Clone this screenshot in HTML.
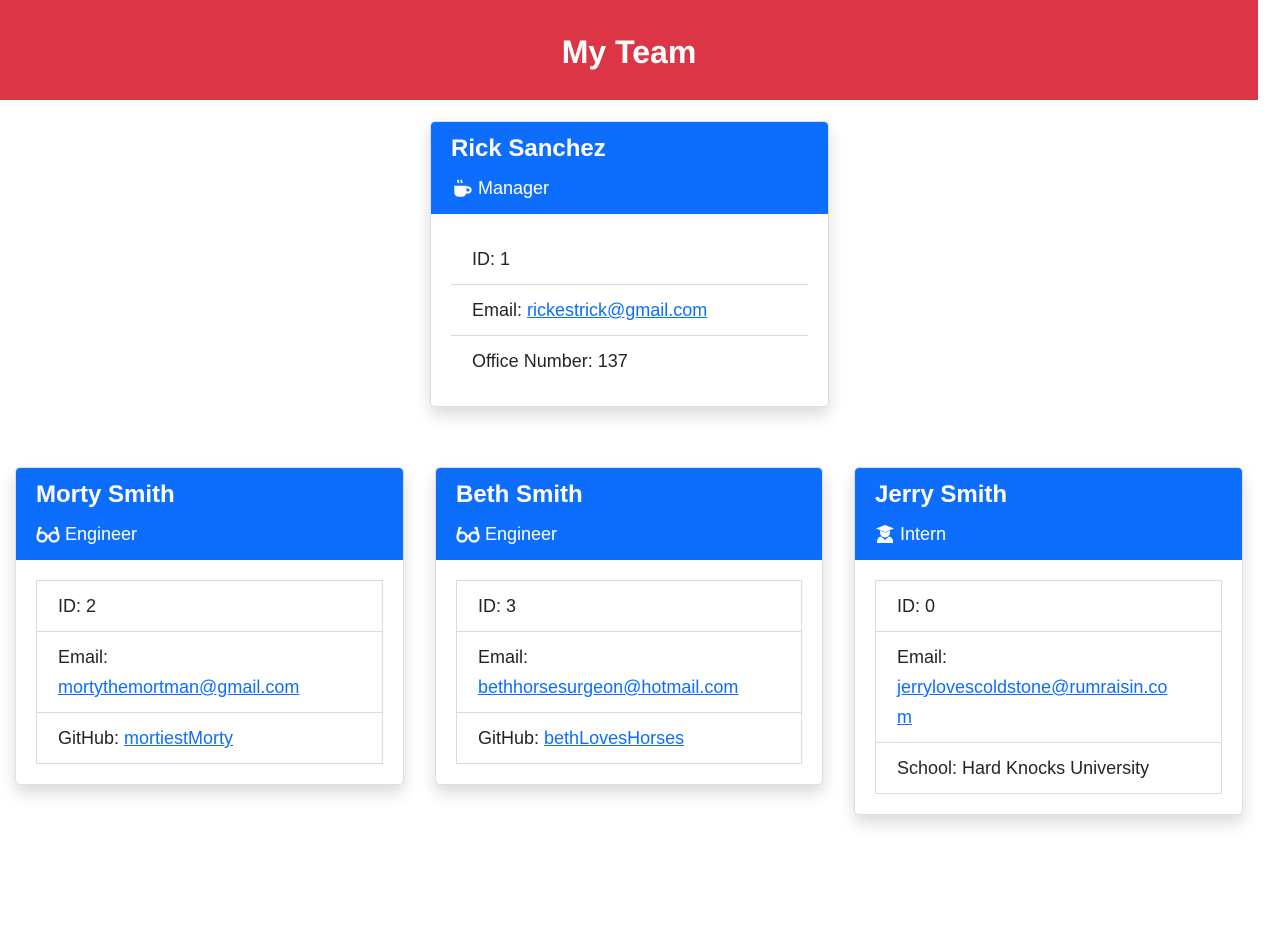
<!DOCTYPE html>
<html><head><meta charset="utf-8"><style>
*{box-sizing:border-box;margin:0;padding:0}
body{width:1273px;height:930px;background:#fff;font-family:"Liberation Sans",sans-serif;color:#212529;font-size:18px;overflow:hidden}
.hdr{position:absolute;left:0;top:0;width:1258px;height:100px;background:#dc3545;color:#fff;text-align:center;font-size:32px;font-weight:bold;line-height:104px}
.card{position:absolute;background:#fff;border:1px solid rgba(0,0,0,.125);border-radius:5px;box-shadow:0 8px 16px rgba(0,0,0,.15);overflow:hidden}
.ch{background:#0d6efd;color:#fff;height:92px;padding:10px 20px}
.ch h2{font-size:24px;font-weight:bold;line-height:32px;margin-top:1px}
.ch .r{font-size:18px;line-height:28px;margin-top:9px;display:flex;align-items:center}
.ch .r svg{margin-right:5px}
.cb{padding:20px}
.lg{border:1px solid #dcdcdc}
.lg.fl{border:none}
.li{padding:10px 21px;line-height:30px;border-top:1px solid #dcdcdc}
.li:first-child{border-top:none}
a{color:#0d6efd;text-decoration:underline}
</style></head><body>
<div class="hdr">My Team</div>

<div class="card" style="left:430px;top:121px;width:399px;height:286px">
<div class="ch"><h2>Rick Sanchez</h2><div class="r"><svg width="22" height="22" viewBox="0 0 20 20"><path d="M3 8h11v6a4 4 0 0 1-4 4H7a4 4 0 0 1-4-4z" fill="#fff"/><path d="M14 9.5h1.5a2.3 2.3 0 0 1 0 4.6H14" stroke="#fff" stroke-width="2" fill="none"/><path d="M6 2.5l1 3M9 2.5l1 3" stroke="#fff" stroke-width="1.5"/></svg>Manager</div></div>
<div class="cb"><div class="lg fl">
<div class="li">ID: 1</div>
<div class="li">Email: <a>rickestrick@gmail.com</a></div>
<div class="li">Office Number: 137</div>
</div></div></div>

<div class="card" style="left:15px;top:467px;width:389px;height:318px">
<div class="ch"><h2>Morty Smith</h2><div class="r"><svg width="24" height="18" viewBox="0 0 24 18"><g stroke="#fff" stroke-width="2.2" fill="none"><circle cx="6" cy="12" r="4.5"/><circle cx="18" cy="12" r="4.5"/><path d="M10 11h4M1.5 12l2-9h2M22.5 12l-2-9h-2"/></g></svg>Engineer</div></div>
<div class="cb"><div class="lg">
<div class="li">ID: 2</div>
<div class="li">Email:<br><a>mortythemortman@gmail.com</a></div>
<div class="li">GitHub: <a>mortiestMorty</a></div>
</div></div></div>

<div class="card" style="left:435px;top:467px;width:388px;height:318px">
<div class="ch"><h2>Beth Smith</h2><div class="r"><svg width="24" height="18" viewBox="0 0 24 18"><g stroke="#fff" stroke-width="2.2" fill="none"><circle cx="6" cy="12" r="4.5"/><circle cx="18" cy="12" r="4.5"/><path d="M10 11h4M1.5 12l2-9h2M22.5 12l-2-9h-2"/></g></svg>Engineer</div></div>
<div class="cb"><div class="lg">
<div class="li">ID: 3</div>
<div class="li">Email:<br><a>bethhorsesurgeon@hotmail.com</a></div>
<div class="li">GitHub: <a>bethLovesHorses</a></div>
</div></div></div>

<div class="card" style="left:854px;top:467px;width:389px;height:348px">
<div class="ch"><h2>Jerry Smith</h2><div class="r"><svg width="20" height="20" viewBox="0 0 20 20"><path d="M10 1L1 4.5 10 8l9-3.5z" fill="#fff"/><path d="M5 6.5v2a5 5 0 0 0 10 0v-2L10 8.5z" fill="#fff"/><path d="M2 19v-2a5 5 0 0 1 4-4.5L10 16l4-3.5a5 5 0 0 1 4 4.5v2z" fill="#fff"/></svg>Intern</div></div>
<div class="cb"><div class="lg">
<div class="li">ID: 0</div>
<div class="li">Email:<br><a>jerrylovescoldstone@rumraisin.co<br>m</a></div>
<div class="li">School: Hard Knocks University</div>
</div></div></div>
</body></html>
